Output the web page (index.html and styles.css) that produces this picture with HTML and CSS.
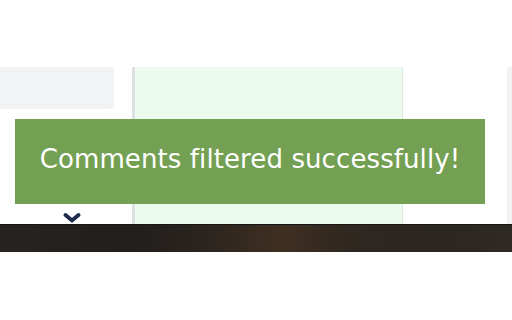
FILE: index.html
```html
<!DOCTYPE html>
<html lang="en">
<head>
    <meta charset="UTF-8">
    <meta name="viewport" content="width=device-width, initial-scale=1.0">
    <title>Comments</title>
    <link rel="stylesheet" href="styles.css">
</head>
<body>
    <div class="top"></div>
    <div class="stage">
        <div class="side">
            <div class="side-box"></div>
            <svg class="chevron" width="18" height="10" viewBox="0 0 18 10">
                <path d="M2.5 2 L9 7.5 L15.5 2" fill="none" stroke="#1f2a4d" stroke-width="3.8" stroke-linecap="round" stroke-linejoin="round"/>
            </svg>
        </div>
        <div class="divider"></div>
        <div class="panel"></div>
        <div class="gap"></div>
        <div class="strip"></div>
        <!-- toast sits over the columns -->
        <div class="toast">Comments filtered successfully!</div>
    </div>
    <div class="footer"></div>
</body>
</html>
```

FILE: styles.css
```css
html, body {
    margin: 0;
    padding: 0;
    background: #fff;
}
.top {
    height: 67px;
}
.stage {
    position: relative;
    display: flex;
    height: 157px;
}
.side {
    display: flex;
    flex-direction: column;
    justify-content: space-between;
    width: 132px;
}
.side-box {
    width: 114px;
    height: 42px;
    background: #f2f3f4;
    border-bottom-right-radius: 3px;
}
.chevron {
    display: block;
    margin: 0 0 1px 63px;
}
.divider {
    width: 3px;
    background: #dfe0e4;
}
.panel {
    width: 267px;
    background: #ebfcef;
    border-right: 1px solid #dde8e0;
}
.gap {
    flex: 1;
}
.strip {
    width: 5px;
    background: #f2f3f2;
}
.toast {
    position: absolute;
    left: 15px;
    top: 52px;
    width: 470px;
    height: 85px;
    box-sizing: border-box;
    display: flex;
    align-items: center;
    justify-content: center;
    padding-bottom: 6px;
    background: #73a052;
    color: #fff;
    font-family: "DejaVu Sans", sans-serif;
    font-size: 26px;
    letter-spacing: 0.1px;
}
.footer {
    height: 27px;
    border-top: 1px solid #151515;
    background: linear-gradient(90deg, #262320 0%, #211e1c 25%, #2b241f 40%, #3f2f21 55%, #2f2720 68%, #2c2621 85%, #2f2923 100%);
}
```
